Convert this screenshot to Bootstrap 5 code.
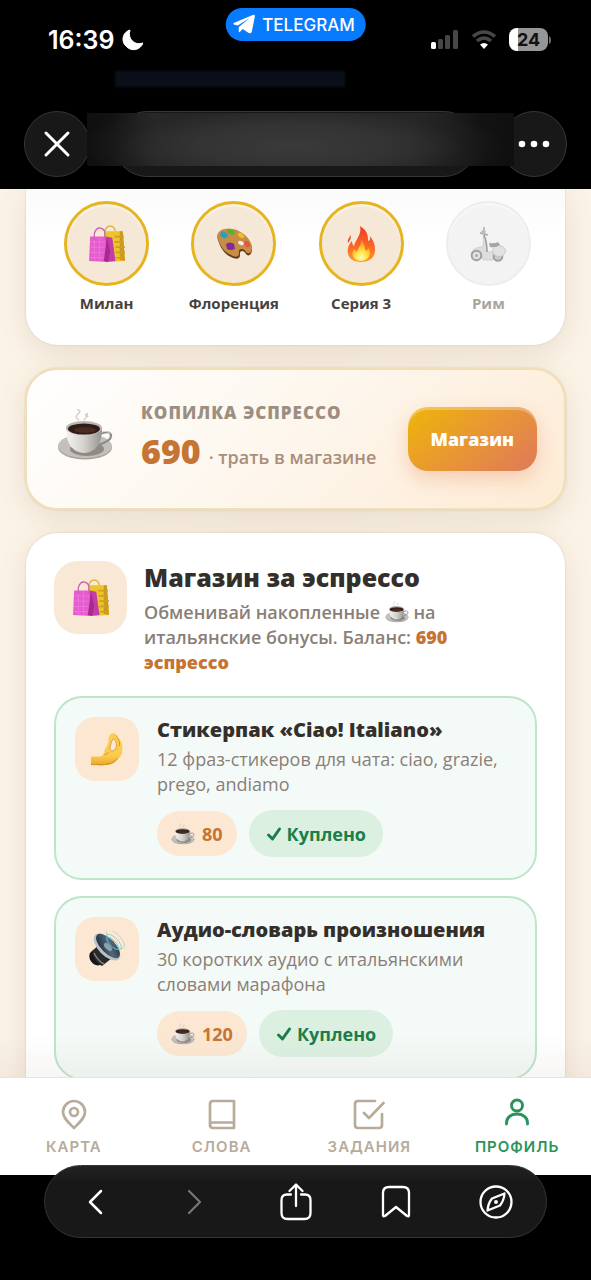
<!DOCTYPE html>
<html lang="ru">
<head>
<meta charset="utf-8">
<meta name="viewport" content="width=device-width, initial-scale=1">
<title>Профиль</title>
<link href="https://cdn.jsdelivr.net/npm/bootstrap@5.3.0/dist/css/bootstrap.min.css" rel="stylesheet">
<style>
  body { font-family: "Open Sans", "Noto Sans", sans-serif; color: #352f2b; background: #000; line-height: 24px; }
  svg { display: block; flex: none; }
  .ui-font { font-family: Inter, "Liberation Sans", sans-serif; }

  /* system header */
  .top-area { height: 189px; flex: none; color: #fff; }
  .status-row { height: 71px; padding: 8px 40px 0 48px; }
  .clock { font-size: 25px; font-weight: 600; }
  .app-pill { top: 8px; height: 33px; padding: 0 11px 0 7px; background: #087bfd; color: #fff; font-size: 17px; font-weight: 500; gap: 7px; }
  .battery { width: 39px; height: 23px; border-radius: 8px; background: linear-gradient(90deg, #fff 24%, #969696 24%); color: #111; font-size: 18px; font-weight: 700; line-height: 23px; }
  .behind-strip { height: 16px; margin: 0 246px 0 115px; background: #0b0f19; filter: blur(1px); }
  .nav-row { margin: 24px 24px 0; height: 66px; }
  .round-btn { width: 66px; height: 66px; border: 1px solid #363636; background: #181818; color: #fff; }
  .title-pill { margin: 0 24px; height: 66px; border: 1px solid #363636; background: #181818; }
  .title-haze { z-index: 1; inset: 1px -38px 10px -28px; background: radial-gradient(ellipse 50% 90% at 48% 62%, #3a3a3a 0%, #333 45%, #2227 80%, #1110 100%), linear-gradient(90deg, #0f0f0f 0%, #131313 6%, #2a2a2a 16%, #2a2a2a 76%, #222 82%, #131313 92%, #0f0f0f 100%); }

  /* page */
  .page { background: linear-gradient(90deg, #fbf3e7, #f8efe2 50%, #fbf3e7); padding: 0 26px; }
  .panel { background: #fff; border-radius: 32px; box-shadow: 0 8px 28px rgba(140, 110, 75, .15), 0 0 2px rgba(150, 105, 60, .25); }
  .awards { border-radius: 0 0 32px 32px; background: linear-gradient(#fafafa, #fff 48px); padding: 12px 25px 30px 29px; display: grid; grid-template-columns: repeat(4, 1fr); gap: 24px; }
  .medal { width: 85px; height: 85px; border: 3px solid #e5b41e; background: #f6e8d7; box-shadow: inset 0 2px 2px #fff8; }
  .medal-off { border: 2px solid #ededed; background: #f3f3f3; }
  .medal-name { font-size: 15px; font-weight: 700; color: #48413c; margin-top: 5px; white-space: nowrap; }
  .medal-name-off { color: #aaa49d; }
  .bank { margin: 23px -1px; min-height: 142px; border: 2px solid #f0deb4; padding: 0 27px 0 30px; background: linear-gradient(135deg, #fff 0%, #fdf7ee 45%, #fdebd5 100%); }
  .bank-label { font-size: 17px; font-weight: 800; letter-spacing: 1px; color: #9c8f82; }
  .bank-sum { font-size: 34px; font-weight: 800; line-height: 52px; color: #c57434; }
  .bank-note { font-size: 18px; font-weight: 600; color: #a88e7b; }
  .shop-btn { height: 64px; padding: 0 23px; border: 0; border-radius: 20px; color: #fff; font-size: 18px; font-weight: 800; background: linear-gradient(140deg, #edb30d 5%, #e89634 50%, #df795b); box-shadow: 0 8px 20px rgba(230, 130, 80, .32), inset 0 3px 0 #fff4; }
  .shop-btn:hover { color: #fff; }
  .shop { padding: 28px 28px 24px; }
  .shop-head { gap: 17px; margin-bottom: 21px; }
  .tile { flex: none; width: 73px; height: 73px; border-radius: 24px; background: #f8e8d5; }
  .tile-sm { width: 64px; height: 64px; border-radius: 20px; background: #fce8d2; }
  .shop-title { font-size: 25px; font-weight: 800; line-height: 30px; margin: 1px 0 8px; }
  .shop-text { font-size: 18px; font-weight: 600; line-height: 25px; margin: 0; color: #8a7f77; }
  .shop-text b { color: #c57434; font-weight: 800; }
  .inline-cup { display: inline-block; vertical-align: -4px; }
  .offer { border: 2px solid #bce5cb; border-radius: 28px; background: #f4faf7; padding: 19px; min-height: 184px; gap: 18px; }
  .offer-title { font-size: 20px; font-weight: 800; margin: 1px 0 5px; line-height: 24px; }
  .offer-text { font-size: 18px; line-height: 25px; color: #8a7f77; margin: 0 0 13px; }
  .price { height: 45px; padding: 0 14px; background: #fce8d2; color: #c57434; font-size: 18px; font-weight: 700; gap: 7px; }
  .bought { height: 47px; padding: 0 17px; background: #dcf0e2; color: #1b7d49; font-size: 18px; font-weight: 700; gap: 5px; }

  /* bottom */
  .page-fade { left: 0; right: 0; bottom: 0; height: 44px; background: linear-gradient(#0000, #8060500f); border-bottom: 1px solid #e9e3de; }
  .tabs { flex: none; height: 97px; background: #fff; padding-top: 20px; }
  .tabs a { flex: 1 1 0; color: #b8ab9a; text-decoration: none; font-size: 15px; font-weight: 600; letter-spacing: 1px; gap: 5px; }
  .tabs a.on { color: #2b935a; }
  .dock-area { flex: none; height: 105px; padding: 0 44px; }
  .dock { margin-top: -10px; height: 73px; border: 1px solid #343434; background: linear-gradient(#222, #181818 18px); position: relative; }
  .dock button { flex: 1 1 0; border: 0; background: none; color: #fff; padding: 0; }
</style>
</head>
<body class="vh-100 d-flex flex-column overflow-hidden">

<svg width="0" height="0" class="position-absolute" aria-hidden="true">
  <defs>
    <linearGradient id="gFire" x1="0" y1="0" x2="0" y2="1"><stop offset="0" stop-color="#ec3a25"/><stop offset=".6" stop-color="#fb6a26"/><stop offset="1" stop-color="#fd9a2b"/></linearGradient>
    <radialGradient id="gCore" cx=".5" cy=".85" r=".7"><stop offset="0" stop-color="#fffbc0"/><stop offset=".5" stop-color="#ffe03c"/><stop offset="1" stop-color="#fd9a28"/></radialGradient>
    <linearGradient id="gCup" x1="0" x2="1"><stop offset="0" stop-color="#f4f3f0"/><stop offset=".5" stop-color="#d3d1cd"/><stop offset="1" stop-color="#96938e"/></linearGradient>
    <linearGradient id="gHand" x1="0" y1="0" x2="0" y2="1"><stop offset="0" stop-color="#f9cf57"/><stop offset=".7" stop-color="#fbcb4b"/><stop offset="1" stop-color="#e9a52c"/></linearGradient>
    <linearGradient id="gCone" x1="0" y1="0" x2="1" y2="1"><stop offset="0" stop-color="#17222e"/><stop offset=".55" stop-color="#536779"/><stop offset="1" stop-color="#222a33"/></linearGradient>
    <symbol id="bags" viewBox="0 0 36 36">
      <path d="M16 12V6q1-5 5-5t5 5v7" fill="none" stroke="#dcb02d" stroke-width="1.2"/>
      <path d="M15 6h18l2 28-17 1z" fill="#ecc52c"/><path d="M30 6h3l2 28-5-1z" fill="#c99b1c"/>
      <path d="M25 11h9M25 16h9M26 21h9M26 26h9M26 31h9" stroke="#d09e24" stroke-width="1.6"/>
      <path d="M2 11h15l1 24-17-1z" fill="#e65bce"/><path d="M17 11l6 1 3 22-9 1z" fill="#c53ba9"/><path d="M18 12l-3 22 4 1 2-10z" fill="#a52b8c"/>
      <path d="M2 16h14M2 21h14M2 26h13M1 31h14M6 11v23M11 11v23" stroke="#f07bdf" stroke-width=".7"/>
      <path d="M6 14V8q2-6 6-5 4 1 4 5v6" fill="none" stroke="#c95fb6" stroke-width="1.2"/>
    </symbol>
    <symbol id="palette" viewBox="0 0 36 36">
      <path d="M2 14C-1 6 8 2 17 4c10 2 19 11 19 19 0 6-4 8-6 5-2-4-7-4-6 1 0 5-5 4-9 2C8 28 4 21 2 14z" fill="#5f3b1a"/>
      <path d="M2 13C-1 5 8 1 17 3c10 2 19 11 19 19 0 5-4 7-6 4-2-4-8-4-7 1 0 5-4 4-8 2C8 26 4 20 2 13z" fill="#c88c45"/>
      <ellipse cx="25" cy="17" rx="3" ry="2" fill="#f8eadb" transform="rotate(25 25 17)"/>
      <ellipse cx="15" cy="6" rx="4" ry="2.500" fill="#52b52d" transform="rotate(20 15 6)"/><ellipse cx="8" cy="9" rx="4" ry="3" fill="#2ba0bd" transform="rotate(30 8 9)"/>
      <ellipse cx="25" cy="9.500" rx="3.500" ry="2" fill="#eebf28" transform="rotate(35 25 9.500)"/><ellipse cx="31" cy="18" rx="3.500" ry="2.500" fill="#df584a" transform="rotate(50 31 18)"/>
      <path d="M10 18q4-3 8 0l1 5q-5 2-8 0z" fill="#7d2d97"/>
    </symbol>
    <symbol id="fire" viewBox="0 0 36 36">
      <path d="M17 0c8 5 8 10 8 15 3-1 2-3 2-5 5 6 8 17 1 23-5 4-15 4-20 0-6-6-3-14 1-18 0 3 1 4 2 5 2-7 8-12 6-20z" fill="url(#gFire)"/>
      <path d="M5 17c-1-4 2-5 2-8 2 3 0 5-2 8z" fill="#ee472b"/>
      <path d="M18 14c5 5 3 8 5 11l3-3c3 7-1 13-8 13S7 29 11 23l3 3c1-5 5-7 4-12z" fill="url(#gCore)"/>
    </symbol>
    <symbol id="scooter" viewBox="0 0 36 36">
      <path d="M13 10c1 4 1 8-1 11-5 0-10 2-11 7 4-3 10-3 11 3 0 2 1 3 3 3h8l2-6c-2-3-5-2-7-2-3-5-1-13-4-16z" fill="#dedede" stroke="#bdbdbd" stroke-width=".6"/>
      <circle cx="6.500" cy="29.500" r="4.800" fill="#e2e2e2" stroke="#a0a0a0" stroke-width="2"/><circle cx="6.500" cy="29.500" r="1.500" fill="#a9a9a9"/>
      <circle cx="28" cy="30.500" r="4.300" fill="#ccc" stroke="#a0a0a0" stroke-width="2"/>
      <ellipse cx="29" cy="25" rx="6.500" ry="5.500" fill="#e2e2e2" stroke="#bfbfbf" stroke-width=".7"/>
      <path d="M19 17q6 1 9-1l2 3q-5 3-10 2z" fill="#a5a5a5"/><path d="M14 9q3 7 3 17" fill="none" stroke="#9d9d9d" stroke-width="1.500"/>
      <path d="M10 7l8 2M14 1v7" stroke="#a4a4a4" stroke-width="1.300"/><circle cx="13.500" cy="6" r="2.200" fill="#bdbdbd"/>
    </symbol>
    <symbol id="cup" viewBox="0 0 56 52">
      <path d="M22 11q-5-3-1-6t-1-5M27 11q4-4 1-6M31 8q-2-2 0-4" fill="none" stroke="#b9b6b4" stroke-width="1.500" opacity=".65"/>
      <ellipse cx="28" cy="38.500" rx="27" ry="12" fill="#a7a29b"/><ellipse cx="28" cy="37" rx="27" ry="12" fill="#c3c0bb"/><ellipse cx="30" cy="40" rx="17" ry="7" fill="#8f8a84"/>
      <path d="M43 25q9-4 11 1 1 6-13 10" fill="none" stroke="#8b8c8e" stroke-width="2.200"/><path d="M43 24q8-4 10 1" fill="none" stroke="#ddd" stroke-width="1"/>
      <path d="M9 19c0 14 5 24 18 25 14-1 18-12 18-25z" fill="url(#gCup)"/>
      <ellipse cx="27" cy="19" rx="18" ry="7" fill="#bbb6b1"/><ellipse cx="27" cy="20" rx="16" ry="5.500" fill="#301c17"/><ellipse cx="28" cy="21" rx="11" ry="3" fill="#4a2b20"/>
    </symbol>
    <symbol id="pinch" viewBox="0 0 36 36">
      <path d="M1 26h10c2-1 3-2 4-4 0-4 2-6 4-9 1-4 0-9 3-11 2-1 4-1 5 1 1 1 2 2 3 3 4 4 5 9 4 15 0 3-2 5-4 7-4 5-8 7-13 7-5 1-10 0-16 0z" fill="url(#gHand)"/>
      <path d="M25 7c-3 3-3 7-4 10 0 2 1 3 3 3 3-1 4-3 4-6s-1-5-3-7z" fill="#fce8d2" stroke="#cf8c24" stroke-width=".8"/>
      <path d="M27 3c3 4 5 7 4 12M20 21q-2 3-5 3M1 34.500h14q8 0 14-6" fill="none" stroke="#d28b1e" stroke-width=".9"/>
    </symbol>
    <symbol id="speaker" viewBox="0 0 36 36">
      <ellipse cx="7" cy="27" rx="6" ry="8" fill="#171717" transform="rotate(-35 7 27)"/><path d="M3 20l8-7 12 14-10 8q-8-4-10-15z" fill="#292929"/><path d="M5 22q4 8 10 11" stroke="#828282" stroke-width="1.500" fill="none"/>
      <ellipse cx="18" cy="16" rx="8.500" ry="17" fill="#b9c1c6" transform="rotate(-44 18 16)"/><ellipse cx="19" cy="15" rx="7" ry="15.500" fill="url(#gCone)" transform="rotate(-44 19 15)"/>
      <ellipse cx="19" cy="16" rx="2.500" ry="5" fill="#8ba2b0" transform="rotate(-44 19 16)"/>
      <g fill="none" stroke="#57bcd0" stroke-width=".8" transform="rotate(-44 25 11)"><ellipse cx="23" cy="11" rx="3" ry="8"/><ellipse cx="25" cy="11" rx="4" ry="10" opacity=".7"/><ellipse cx="28" cy="10" rx="5" ry="12" opacity=".5"/></g>
    </symbol>
    <symbol id="tick" viewBox="0 0 16 16"><path d="M2.500 9l4 4 7-10" fill="none" stroke="currentColor" stroke-width="3" stroke-linecap="round" stroke-linejoin="round"/></symbol>
  </defs>
</svg>

<header class="top-area ui-font position-relative">
  <a href="#" class="app-pill position-absolute start-50 translate-middle-x rounded-pill d-flex align-items-center text-decoration-none">
    <svg width="23" height="21" viewBox="0 0 23 21"><path d="M1 9L20 1q3-1 2 2l-3 15q-1 2-3 1l-6-4-3 3q-1 1-1-1v-4L17 4 5 11.500 1 10.500q-1-1 0-1.500z" fill="#fff"/></svg>TELEGRAM
  </a>
  <div class="status-row d-flex align-items-center justify-content-between">
    <div class="d-flex align-items-center gap-2">
      <span class="clock">16:39</span>
      <svg width="21" height="22" viewBox="0 0 21 22"><path d="M8 1C1 3-1 11 3 16c5 7 15 6 18-2C13 17 5 10 8 1z" fill="#fff" stroke="#fff" stroke-width="1" stroke-linejoin="round"/></svg>
    </div>
    <div class="d-flex align-items-center">
      <svg class="me-2" width="32" height="20" viewBox="0 0 32 20"><rect x="4" y="12" width="5" height="7" rx="1.500" fill="#fff"/><g fill="#464646"><rect x="11" y="9" width="5" height="10" rx="1.500"/><rect x="18" y="5" width="5" height="14" rx="1.500"/><rect x="26" y="0" width="5" height="19" rx="1.500"/></g></svg>
      <svg class="me-2 ms-1" width="26" height="20" viewBox="0 0 26 20" fill="none"><path d="M2 6.500q11-9 22 0M6 11q7-6 14 0" stroke="#484848" stroke-width="3.500"/><path d="M13 19l-4-4.500q4-3 8 0z" fill="#fff"/></svg>
      <span class="battery text-center ms-1">24</span>
      <svg width="3" height="8" viewBox="0 0 3 8"><path d="M1 0q2 1 2 4T1 8z" fill="#777"/></svg>
    </div>
  </div>
  <div class="behind-strip"></div>
  <div class="nav-row d-flex">
    <button type="button" class="round-btn rounded-circle p-0 d-flex align-items-center justify-content-center" aria-label="Закрыть">
      <svg width="28" height="28" viewBox="0 0 28 28"><path d="M3 3l22 22M25 3L3 25" stroke="#fff" stroke-width="3" stroke-linecap="round"/></svg>
    </button>
    <div class="title-pill flex-grow-1 rounded-pill position-relative"><div class="title-haze position-absolute"></div></div>
    <button type="button" class="round-btn rounded-circle p-0 d-flex align-items-center justify-content-center" aria-label="Ещё">
      <svg width="32" height="8" viewBox="0 0 32 8" fill="#fff"><circle cx="4" cy="4" r="3.300"/><circle cx="16" cy="4" r="3.300"/><circle cx="28" cy="4" r="3.300"/></svg>
    </button>
  </div>
</header>

<main class="page flex-grow-1 overflow-hidden position-relative">
  <section class="panel awards">
    <div class="d-flex flex-column align-items-center">
      <div class="medal rounded-circle d-flex align-items-center justify-content-center"><svg width="38" height="38"><use href="#bags"/></svg></div>
      <div class="medal-name">Милан</div>
    </div>
    <div class="d-flex flex-column align-items-center">
      <div class="medal rounded-circle d-flex align-items-center justify-content-center"><svg width="38" height="36"><use href="#palette"/></svg></div>
      <div class="medal-name">Флоренция</div>
    </div>
    <div class="d-flex flex-column align-items-center">
      <div class="medal rounded-circle d-flex align-items-center justify-content-center"><svg width="36" height="36"><use href="#fire"/></svg></div>
      <div class="medal-name">Серия 3</div>
    </div>
    <div class="d-flex flex-column align-items-center">
      <div class="medal medal-off rounded-circle d-flex align-items-center justify-content-center"><svg width="36" height="36"><use href="#scooter"/></svg></div>
      <div class="medal-name medal-name-off">Рим</div>
    </div>
  </section>

  <section class="panel bank d-flex align-items-center">
    <svg class="mb-2" width="56" height="52"><use href="#cup"/></svg>
    <div class="ms-4 ps-1 flex-grow-1 text-nowrap">
      <div class="bank-label">КОПИЛКА ЭСПРЕССО</div>
      <div class="d-flex align-items-baseline gap-2"><span class="bank-sum">690</span><span class="bank-note">· трать в магазине</span></div>
    </div>
    <button type="button" class="btn shop-btn">Магазин</button>
  </section>

  <section class="panel shop">
    <div class="shop-head d-flex">
      <div class="tile d-flex align-items-center justify-content-center"><svg width="38" height="38"><use href="#bags"/></svg></div>
      <div class="pe-4">
        <h1 class="shop-title">Магазин за эспрессо</h1>
        <p class="shop-text">Обменивай накопленные <svg class="inline-cup" width="24" height="22"><use href="#cup"/></svg> на итальянские бонусы. Баланс: <b>690 эспрессо</b></p>
      </div>
    </div>
    <article class="offer d-flex mb-3">
      <div class="tile tile-sm d-flex align-items-center justify-content-center"><svg width="34" height="34"><use href="#pinch"/></svg></div>
      <div>
        <h2 class="offer-title">Стикерпак «Ciao! Italiano»</h2>
        <p class="offer-text">12 фраз-стикеров для чата: ciao, grazie, prego, andiamo</p>
        <div class="d-flex align-items-center gap-2">
          <span class="price rounded-pill d-flex align-items-center"><svg width="24" height="22"><use href="#cup"/></svg>80</span>
          <span class="bought rounded-pill d-flex align-items-center ms-1"><svg width="16" height="16"><use href="#tick"/></svg>Куплено</span>
        </div>
      </div>
    </article>
    <article class="offer d-flex mb-3">
      <div class="tile tile-sm d-flex align-items-center justify-content-center"><svg width="36" height="36"><use href="#speaker"/></svg></div>
      <div>
        <h2 class="offer-title">Аудио-словарь произношения</h2>
        <p class="offer-text">30 коротких аудио с итальянскими словами марафона</p>
        <div class="d-flex align-items-center gap-2">
          <span class="price rounded-pill d-flex align-items-center"><svg width="24" height="22"><use href="#cup"/></svg>120</span>
          <span class="bought rounded-pill d-flex align-items-center ms-1"><svg width="16" height="16"><use href="#tick"/></svg>Куплено</span>
        </div>
      </div>
    </article>
  </section>
  <div class="page-fade position-absolute"></div>
</main>

<nav class="tabs ui-font d-flex">
  <a href="#" class="d-flex flex-column align-items-center">
    <svg width="32" height="32" viewBox="0 0 32 32" fill="none" stroke="currentColor" stroke-width="2.700" stroke-linejoin="round"><path d="M16 30C11 25 5 20 5 14a11 11 0 0 1 22 0c0 6-6 11-11 16z"/><circle cx="16" cy="14" r="4"/></svg>КАРТА</a>
  <a href="#" class="d-flex flex-column align-items-center">
    <svg width="32" height="32" viewBox="0 0 32 32" fill="none" stroke="currentColor" stroke-width="2.700" stroke-linejoin="round"><path d="M4 27V6q0-3 3-3h21v27H7q-3 0-3-3 0-2.500 3-2.500h21"/></svg>СЛОВА</a>
  <a href="#" class="d-flex flex-column align-items-center">
    <svg width="32" height="32" viewBox="0 0 32 32" fill="none" stroke="currentColor" stroke-width="2.700" stroke-linecap="round" stroke-linejoin="round"><path d="M22 3H5q-3 0-3 3v21q0 3 3 3h21q3 0 3-3V16M11 15l5 5L30.500 5"/></svg>ЗАДАНИЯ</a>
  <a href="#" class="on d-flex flex-column align-items-center" aria-current="page">
    <svg width="32" height="32" viewBox="0 0 32 32" fill="none" stroke="currentColor" stroke-width="2.900" stroke-linecap="round"><circle cx="16" cy="7.500" r="5.500"/><path d="M5.500 26v-1c0-5 4-9 10.500-9s10.500 4 10.500 9v1"/></svg>ПРОФИЛЬ</a>
</nav>

<footer class="dock-area">
  <div class="dock rounded-pill d-flex">
    <button type="button" class="d-flex align-items-center justify-content-center" aria-label="Назад"><svg width="16" height="28" viewBox="0 0 16 28"><path d="M14 3L3 14l11 11" fill="none" stroke="#fff" stroke-width="2.500" stroke-linecap="round" stroke-linejoin="round"/></svg></button>
    <button type="button" class="d-flex align-items-center justify-content-center" aria-label="Вперёд"><svg width="16" height="28" viewBox="0 0 16 28"><path d="M2 3l11 11L2 25" fill="none" stroke="#777" stroke-width="2.200" stroke-linecap="round" stroke-linejoin="round"/></svg></button>
    <button type="button" class="d-flex align-items-center justify-content-center" aria-label="Поделиться"><svg width="32" height="38" viewBox="0 0 32 38" fill="none" stroke="#fff" stroke-width="2.300" stroke-linecap="round" stroke-linejoin="round"><path d="M11 11.500H7q-5.500 0-5.500 5.500v13q0 6 6 6h17q6 0 6-6V17q0-5.500-5.500-5.500h-4M16 23V2M9.500 8L16 1.500 22.500 8"/></svg></button>
    <button type="button" class="d-flex align-items-center justify-content-center" aria-label="Закладки"><svg width="30" height="34" viewBox="0 0 30 34" fill="none" stroke="#fff" stroke-width="2.300" stroke-linejoin="round"><path d="M2 30V8q0-6 6-6h14q6 0 6 6v22q0 2-2 1l-11-9-11 9q-2 1-2-1z"/></svg></button>
    <button type="button" class="d-flex align-items-center justify-content-center" aria-label="Открыть в браузере"><svg width="34" height="34" viewBox="0 0 34 34" fill="none" stroke="#fff" stroke-width="2.300" stroke-linejoin="round"><circle cx="17" cy="17" r="15.500"/><path d="M25.500 8.500L13 13.500q-4 5-4.500 12L21 20.500q4-5 4.500-12z"/><circle cx="17" cy="17" r="2" fill="#fff" stroke="none"/></svg></button>
  </div>
</footer>

<script src="https://cdn.jsdelivr.net/npm/bootstrap@5.3.0/dist/js/bootstrap.bundle.min.js"></script>
</body>
</html>
